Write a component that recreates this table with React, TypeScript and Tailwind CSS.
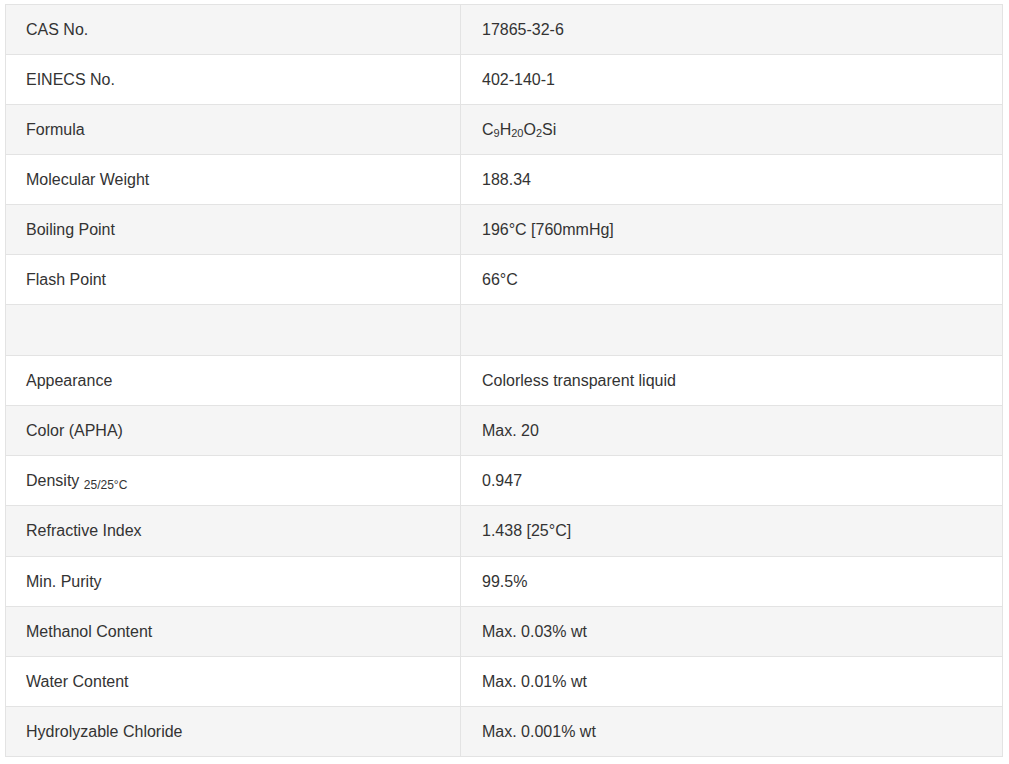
const rows: [React.ReactNode, React.ReactNode][] = [
  ["CAS No.", "17865-32-6"],
  ["EINECS No.", "402-140-1"],
  [
    "Formula",
    <>
      C<sub className="text-[11px]">9</sub>H<sub className="text-[11px]">20</sub>O<sub className="text-[11px]">2</sub>Si
    </>,
  ],
  ["Molecular Weight", "188.34"],
  ["Boiling Point", "196°C [760mmHg]"],
  ["Flash Point", "66°C"],
  ["", ""],
  ["Appearance", "Colorless transparent liquid"],
  ["Color (APHA)", "Max. 20"],
  [
    <>
      Density <sub className="text-[12px]">25/25°C</sub>
    </>,
    "0.947",
  ],
  ["Refractive Index", "1.438 [25°C]"],
  ["Min. Purity", "99.5%"],
  ["Methanol Content", "Max. 0.03% wt"],
  ["Water Content", "Max. 0.01% wt"],
  ["Hydrolyzable Chloride", "Max. 0.001% wt"],
];

// a couple of rows come out 1px taller in the original
const tall = [6, 10];

export default function App() {
  return (
    <div className="bg-white min-h-screen pt-[4px] pl-[5px] font-['Liberation_Sans',Arial,sans-serif] text-[16px] text-[#333]">
      <table className="border-collapse w-[998px] table-fixed">
        <colgroup>
          <col className="w-[455px]" />
          <col />
        </colgroup>
        <tbody>
          {rows.map(([label, value], i) => {
            const h = tall.includes(i) ? "h-[51px]" : "h-[50px]";
            return (
              <tr key={i} className={i % 2 === 0 ? "bg-[#f5f5f5]" : "bg-white"}>
                <td className={`border border-[#e3e3e3] ${h} px-[20px] align-middle`}>{label}</td>
                <td className={`border border-[#e3e3e3] ${h} px-[21px] align-middle`}>{value}</td>
              </tr>
            );
          })}
        </tbody>
      </table>
    </div>
  );
}
